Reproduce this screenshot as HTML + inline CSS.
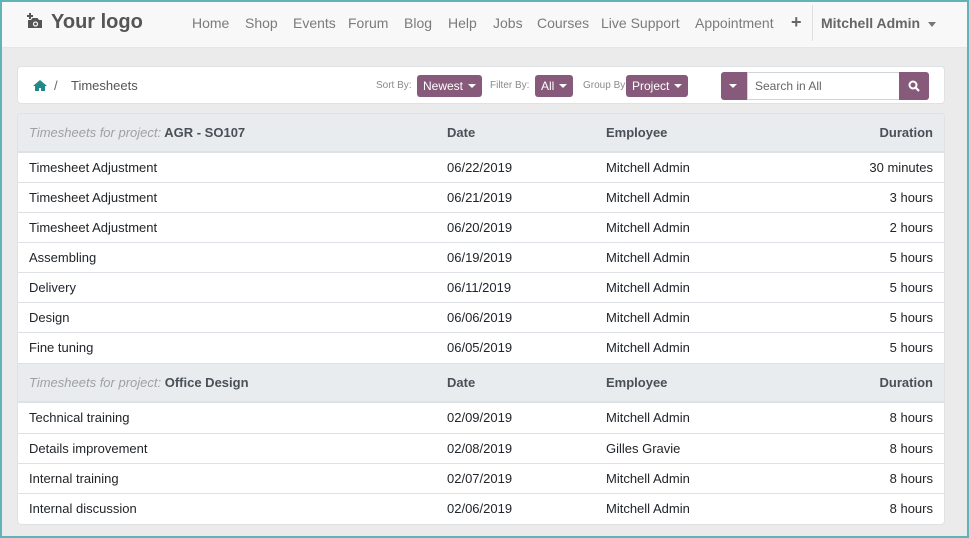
<!DOCTYPE html>
<html><head><meta charset="utf-8"><style>
*{box-sizing:border-box;margin:0;padding:0}
body{width:969px;height:538px;overflow:hidden;background:#ebebeb;font-family:"Liberation Sans",sans-serif;font-size:13px;color:#212529;position:relative}
.frame{position:absolute;inset:0;border:2px solid #5fb4b8;pointer-events:none;z-index:5}
.nav{position:absolute;left:0;top:0;width:969px;height:48px;background:#f8f8f8;border-bottom:1px solid #e6e6e6}
.logo{position:absolute;left:51px;top:11px;font-size:20px;font-weight:bold;color:#555}
.nav a{position:absolute;top:15px;color:#7b7b7b;font-size:14px;text-decoration:none}
.card{position:absolute;left:17px;width:928px;background:#fff;border:1px solid #dfe2e5;border-radius:4px}
.lbl{position:absolute;top:13px;font-size:10px;color:#8a8a8a}
.btn{position:absolute;top:8px;height:22px;background:#875a7b;color:#fff;border-radius:3px;font-size:12px;line-height:22px;padding:0 6px}
.caret{display:inline-block;border-left:4px solid transparent;border-right:4px solid transparent;border-top:4px solid #fff;vertical-align:middle;margin-left:5px;margin-top:-2px}
.row{position:absolute;left:0;width:926px;height:30px;border-top:1px solid #dee2e6;line-height:29px}
.hd{position:absolute;left:0;width:926px;background:#e9ecef;border-bottom:2px solid #dee2e6;font-weight:bold;color:#495057}
.c1{position:absolute;left:11px}.c2{position:absolute;left:429px}.c3{position:absolute;left:588px}.c4{position:absolute;right:11px}
.it{font-style:italic;font-weight:normal;color:#a0a0a0}
</style></head><body>
<div class="frame"></div>
<div class="nav">
<svg style="position:absolute;left:26px;top:13px" width="18" height="16" viewBox="0 0 18 16"><path d="M3 0v2H1v2h2v2h2V4h2V2H5V0z" fill="#555"/><path d="M2 7h3l1.5-2h5L13 7h3v8H2z" fill="#555"/><circle cx="9.5" cy="11" r="2.6" fill="#f8f8f8"/><circle cx="9.5" cy="11" r="1.4" fill="#555"/></svg>
<div class="logo">Your logo</div>
<a style="left:192px">Home</a><a style="left:245px">Shop</a><a style="left:293px">Events</a><a style="left:348px">Forum</a><a style="left:404px">Blog</a><a style="left:448px">Help</a><a style="left:493px">Jobs</a><a style="left:537px">Courses</a><a style="left:601px">Live Support</a><a style="left:695px">Appointment</a>
<a style="left:791px;color:#666;font-weight:bold;font-size:18px;top:12px">+</a>
<div style="position:absolute;left:812px;top:5px;width:1px;height:36px;background:#e0e0e0"></div>
<a style="left:821px;color:#666;font-weight:bold">Mitchell Admin <span style="display:inline-block;border-left:4px solid transparent;border-right:4px solid transparent;border-top:5px solid #777;vertical-align:middle;margin-left:4px"></span></a>
</div>
<div class="card" style="top:66px;height:38px">
<svg style="position:absolute;left:15px;top:13px" width="14" height="11" viewBox="0 0 14 11"><path d="M7 0L0 6h2v5h4V8h2v3h4V6h2z" fill="#1f8a8a"/></svg>
<span style="position:absolute;left:36px;top:11px;color:#666">/</span>
<span style="position:absolute;left:53px;top:11px;color:#555">Timesheets</span>
<span class="lbl" style="left:358px">Sort By:</span><span class="btn" style="left:399px">Newest<i class="caret"></i></span>
<span class="lbl" style="left:472px">Filter By:</span><span class="btn" style="left:517px">All<i class="caret"></i></span>
<span class="lbl" style="left:565px">Group By:</span><span class="btn" style="left:608px">Project<i class="caret"></i></span>
<span class="btn" style="left:703px;top:5px;height:28px;width:26px;border-radius:3px 0 0 3px;padding:0 0 0 3px;line-height:28px"><i class="caret"></i></span>
<span style="position:absolute;left:729px;top:5px;width:153px;height:28px;border:1px solid #ced4da;color:#666;font-size:12px;line-height:26px;padding-left:7px">Search in All</span>
<span class="btn" style="left:881px;top:5px;height:28px;width:30px;border-radius:0 3px 3px 0;padding:0">
<svg style="position:absolute;left:9px;top:8px" width="12" height="12" viewBox="0 0 12 12"><circle cx="5" cy="5" r="3.5" stroke="#fff" stroke-width="2" fill="none"/><path d="M7.5 7.5L11 11" stroke="#fff" stroke-width="2.2"/></svg></span>
</div>
<div class="card" style="top:113px;height:412px;overflow:hidden">
<div class="hd" style="top:0;height:39px;line-height:37px"><span class="c1"><span class="it">Timesheets for project:</span> AGR - SO107</span><span class="c2">Date</span><span class="c3">Employee</span><span class="c4">Duration</span></div>
<div class="row" style="top:39px;border-top:none"><span class="c1">Timesheet Adjustment</span><span class="c2">06/22/2019</span><span class="c3">Mitchell Admin</span><span class="c4">30 minutes</span></div>
<div class="row" style="top:68px"><span class="c1">Timesheet Adjustment</span><span class="c2">06/21/2019</span><span class="c3">Mitchell Admin</span><span class="c4">3 hours</span></div>
<div class="row" style="top:98px"><span class="c1">Timesheet Adjustment</span><span class="c2">06/20/2019</span><span class="c3">Mitchell Admin</span><span class="c4">2 hours</span></div>
<div class="row" style="top:128px"><span class="c1">Assembling</span><span class="c2">06/19/2019</span><span class="c3">Mitchell Admin</span><span class="c4">5 hours</span></div>
<div class="row" style="top:158px"><span class="c1">Delivery</span><span class="c2">06/11/2019</span><span class="c3">Mitchell Admin</span><span class="c4">5 hours</span></div>
<div class="row" style="top:188px"><span class="c1">Design</span><span class="c2">06/06/2019</span><span class="c3">Mitchell Admin</span><span class="c4">5 hours</span></div>
<div class="row" style="top:218px"><span class="c1">Fine tuning</span><span class="c2">06/05/2019</span><span class="c3">Mitchell Admin</span><span class="c4">5 hours</span></div>
<div class="hd" style="top:249px;height:40px;line-height:38px;border-top:1px solid #dee2e6"><span class="c1"><span class="it">Timesheets for project:</span> Office Design</span><span class="c2">Date</span><span class="c3">Employee</span><span class="c4">Duration</span></div>
<div class="row" style="top:289px;border-top:none"><span class="c1">Technical training</span><span class="c2">02/09/2019</span><span class="c3">Mitchell Admin</span><span class="c4">8 hours</span></div>
<div class="row" style="top:319px"><span class="c1">Details improvement</span><span class="c2">02/08/2019</span><span class="c3">Gilles Gravie</span><span class="c4">8 hours</span></div>
<div class="row" style="top:349px"><span class="c1">Internal training</span><span class="c2">02/07/2019</span><span class="c3">Mitchell Admin</span><span class="c4">8 hours</span></div>
<div class="row" style="top:379px"><span class="c1">Internal discussion</span><span class="c2">02/06/2019</span><span class="c3">Mitchell Admin</span><span class="c4">8 hours</span></div>
</div>
</body></html>
